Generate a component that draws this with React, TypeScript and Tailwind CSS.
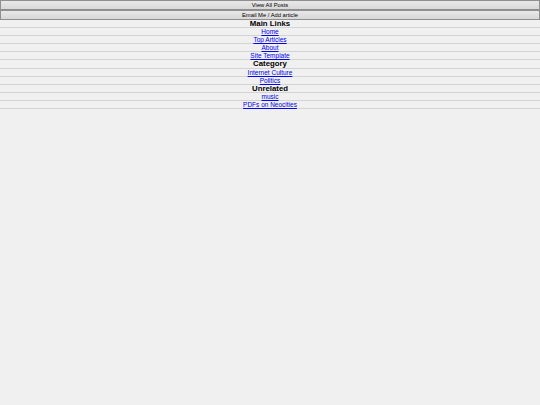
const sections = [
  { title: "Main Links", links: ["Home", "Top Articles", "About", "Site Template"] },
  { title: "Category", links: ["Internet Culture", "Politics"] },
  { title: "Unrelated", links: ["music", "PDFs on Neocities"] },
];

function NavButton({ label }: { label: string }) {
  return (
    <button className="block w-full h-[10px] border border-[#8f8f8f] bg-gradient-to-b from-[#e8e8e8] to-[#d8d8d8] text-[5.8px] leading-[8px] text-black">
      {label}
    </button>
  );
}

export default function App() {
  return (
    <div className="min-h-[405px] w-full bg-[#f0f0f0] text-center font-['Liberation_Sans',Arial,sans-serif]">
      <NavButton label="View All Posts" />
      <NavButton label="Email Me / Add article" />
      <ul>
        {sections.map((s) => (
          <li key={s.title}>
            <div className="h-[8.1px] border-b border-[#d3d3d3] text-[7.8px] leading-[7px] font-bold text-black">{s.title}</div>
            {s.links.map((l) => (
              <div key={l} className="h-[8.1px] border-b border-[#d3d3d3] text-[6.5px] leading-[7.5px]">
                <a href="#" className="text-[#0000ee] underline">{l}</a>
              </div>
            ))}
          </li>
        ))}
      </ul>
    </div>
  );
}
